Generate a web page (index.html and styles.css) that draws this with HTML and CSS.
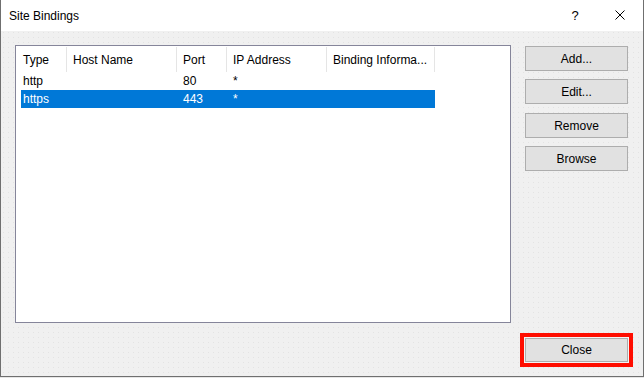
FILE: index.html
```html
<!DOCTYPE html>
<html>
<head>
<meta charset="utf-8">
<link rel="stylesheet" href="styles.css">
</head>
<body>
<div class="window">
  <div class="titlebar">
    <span class="title">Site Bindings</span>
    <span class="tb-btn help">?</span>
    <span class="tb-btn closex">
      <svg width="10" height="10" viewBox="0 0 10 10"><path d="M0.5 0.5 L9.5 9.5 M9.5 0.5 L0.5 9.5" stroke="#000" stroke-width="1" fill="none"/></svg>
    </span>
  </div>
  <div class="content">
    <div class="list">
      <div class="list-header">
        <div class="hcell c-type">Type</div>
        <div class="hcell c-host">Host Name</div>
        <div class="hcell c-port">Port</div>
        <div class="hcell c-ip">IP Address</div>
        <div class="hcell c-bind">Binding Informa...</div>
      </div>
      <div class="row">
        <div class="cell c-type">http</div>
        <div class="cell c-host"></div>
        <div class="cell c-port">80</div>
        <div class="cell c-ip">*</div>
        <div class="cell c-bind"></div>
      </div>
      <div class="row selected">
        <div class="cell c-type">https</div>
        <div class="cell c-host"></div>
        <div class="cell c-port">443</div>
        <div class="cell c-ip">*</div>
        <div class="cell c-bind"></div>
      </div>
    </div>
    <div class="actions">
      <button class="btn">Add...</button>
      <button class="btn">Edit...</button>
      <button class="btn btn-remove">Remove</button>
      <button class="btn">Browse</button>
    </div>
  </div>
  <div class="footer">
    <div class="focus-ring"><button class="btn">Close</button></div>
  </div>
</div>
</body>
</html>
```
FILE: styles.css
```css
html, body {
  margin: 0;
  padding: 0;
  background: #e6e6e6;
}
body {
  font-family: "Liberation Sans", Arial, sans-serif;
  font-size: 12px;
  color: #000;
}
.window {
  width: 644px;
  height: 377px;
  box-sizing: border-box;
  border: 1px solid #6f6f6f;
  border-top: none;
  background-color: #f0f0f0;
  background-image: radial-gradient(circle, #e3e3e3 0.7px, transparent 1px);
  background-size: 5px 5px;
  display: flex;
  flex-direction: column;
}
.titlebar {
  height: 31px;
  background: #fff;
  display: flex;
  align-items: center;
  padding-left: 8px;
  flex-shrink: 0;
}
.title {
  flex: 1;
  padding-top: 1px;
}
.tb-btn {
  width: 46px;
  height: 31px;
  display: flex;
  align-items: center;
  justify-content: center;
}
.help {
  font-size: 13px;
  padding-left: 2px;
  box-sizing: border-box;
}
.closex svg {
  display: block;
  margin-top: -1px;
}
.content {
  display: flex;
  padding: 14px 0 0 14px;
  gap: 14px;
}
.list {
  width: 496px;
  height: 278px;
  box-sizing: border-box;
  border: 1px solid #85859a;
  background: #fff;
}
.list-header {
  display: flex;
  height: 26px;
}
.hcell {
  height: 25px;
  margin-top: 1px;
  box-sizing: border-box;
  border-right: 1px solid #e5e5e5;
  padding-left: 6px;
  display: flex;
  align-items: center;
  white-space: nowrap;
  overflow: hidden;
}
.hcell.c-type { width: 51px; padding-left: 7px; }
.c-host { width: 110px; }
.c-port { width: 50px; }
.c-ip { width: 100px; }
.c-bind { width: 108px; }
.row {
  display: flex;
  height: 18px;
  margin-left: 5px;
  width: 414px;
}
.row.selected {
  background: #0078d7;
  color: #fff;
}
.cell {
  box-sizing: border-box;
  padding-left: 6px;
  display: flex;
  align-items: center;
  white-space: nowrap;
}
.cell.c-type { width: 46px; padding-left: 2px; }
.actions {
  display: flex;
  flex-direction: column;
  gap: 8px;
  margin-top: 1px;
}
.btn {
  width: 103px;
  height: 25px;
  box-sizing: border-box;
  border: 1px solid #adadad;
  background: #e1e1e1;
  font-family: "Liberation Sans", Arial, sans-serif;
  font-size: 12px;
  color: #000;
  padding: 0;
  margin: 0;
}
.btn-remove {
  margin-top: 1px;
}
.footer {
  display: flex;
  justify-content: flex-end;
  padding-right: 10px;
  margin-top: 10px;
}
.focus-ring {
  border: 4px solid #ff0d00;
  padding: 1px;
  background: #f4f4f4;
  display: flex;
}
.focus-ring .btn {
  height: 24px;
}
```
